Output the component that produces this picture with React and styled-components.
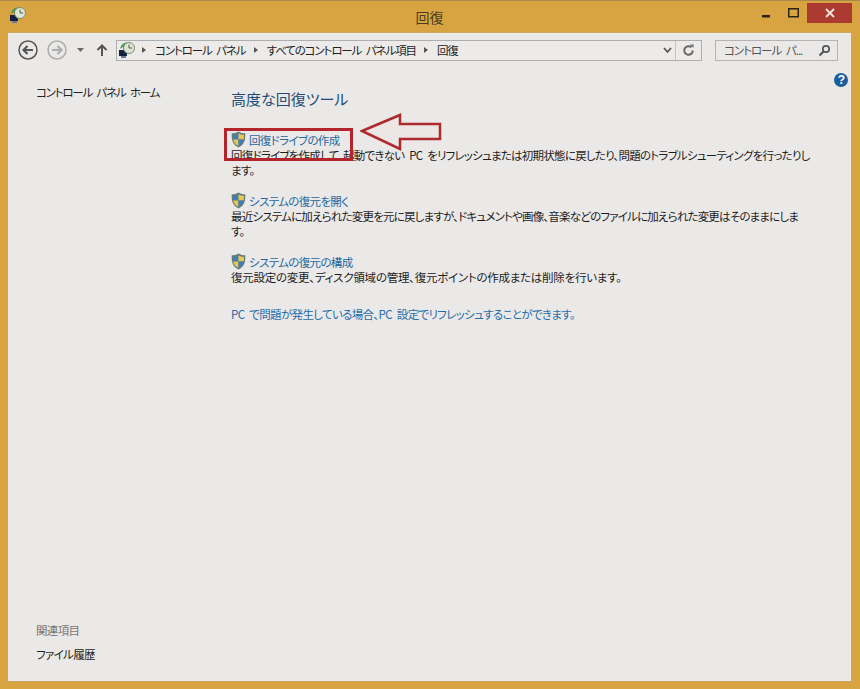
import React from "react";
import styled, { createGlobalStyle } from "styled-components";

const Global = createGlobalStyle`
  html, body { margin: 0; padding: 0; background: #d6a542; }
  body {
    font-family: "Noto Sans CJK JP", "Liberation Sans", sans-serif;
    font-feature-settings: "palt";
    font-size: 11.5px;
    letter-spacing: -0.65px;
    word-spacing: 3px;
    color: #1c1c1c;
  }
`;

const Frame = styled.div`
  width: 860px;
  height: 689px;
  box-sizing: border-box;
  display: flex;
  flex-direction: column;
  padding: 3px 9px 8px 8px;
  background: #d7a441;
  border-top: 1px solid #a98a4c;
  overflow: hidden;
`;

const TitleBar = styled.div`
  position: relative;
  height: 29px;
  flex: none;
  display: flex;
  align-items: center;
  justify-content: center;
  padding-bottom: 4px;
  box-sizing: border-box;
  font-size: 14px;
  letter-spacing: 0;
  color: #4a3c22;
`;

const TitleIcon = styled.div`
  position: absolute;
  left: 1px;
  top: 2px;
`;

const WindowButtons = styled.div`
  position: absolute;
  right: -1px;
  top: -1px;
  display: flex;
  align-items: flex-start;
`;

const WinButton = styled.div`
  width: ${(p) => p.$w}px;
  height: 20px;
  display: flex;
  align-items: center;
  justify-content: center;
  background: ${(p) => p.$bg || "transparent"};
`;

const Client = styled.div`
  flex: 1;
  background: #ebe9e7;
  display: flex;
  flex-direction: column;
  border-top: 1px solid #f3efe6;
  box-shadow: 0 0 0 1px #c9a763;
`;

const Toolbar = styled.div`
  height: 35px;
  flex: none;
  display: flex;
  align-items: center;
  padding: 0 13px 3px 9px;
  box-sizing: border-box;
`;

const NavIcons = styled.div`
  display: flex;
  align-items: center;
  width: 99px;
  flex: none;
`;

const NavGap = styled.span`
  width: 7px;
  flex: none;
`;

const AddressBar = styled.div`
  width: 586px;
  height: 21px;
  flex: none;
  box-sizing: border-box;
  border: 1px solid #aeaeae;
  display: flex;
  align-items: center;
  padding-left: 1px;
  background: #edebe9;
`;

const Crumbs = styled.div`
  flex: 1;
  display: flex;
  align-items: center;
  white-space: nowrap;
  margin-left: -2px;
  letter-spacing: -1.1px;
  color: #222;
`;

const Sep = styled.span`
  width: 0;
  height: 0;
  margin: 0 9px 0 8px;
  border-left: 4px solid #555;
  border-top: 3.5px solid transparent;
  border-bottom: 3.5px solid transparent;
`;

const AddrEnd = styled.div`
  width: 25px;
  align-self: stretch;
  border-left: 1px solid #c4c4c4;
  display: flex;
  align-items: center;
  justify-content: center;
`;

const Chevron = styled.div`
  width: 16px;
  display: flex;
  justify-content: center;
`;

const SearchBox = styled.div`
  margin-left: 13px;
  width: 123px;
  height: 21px;
  flex: none;
  box-sizing: border-box;
  border: 1px solid #b4b4b4;
  display: flex;
  align-items: center;
  justify-content: space-between;
  padding: 0 6px 0 8px;
  letter-spacing: -1px;
  color: #555;
  white-space: nowrap;
`;

const Body = styled.div`
  flex: 1;
  position: relative;
  display: flex;
`;

const Side = styled.aside`
  width: 223px;
  flex: none;
  box-sizing: border-box;
  padding: 14px 0 18px 28px;
  display: flex;
  flex-direction: column;
  justify-content: space-between;
`;

const SideLink = styled.div`
  line-height: 18px;
  letter-spacing: ${(p) => p.$track || -0.65}px;
  color: #222;
`;

const SideHead = styled.div`
  line-height: 18px;
  color: #7a7672;
  margin-bottom: 6px;
`;

const Main = styled.main`
  flex: 1;
  padding-top: 18px;
`;

const Heading = styled.h1`
  margin: 0 0 20px;
  font-size: 15px;
  font-weight: 400;
  line-height: 24px;
  letter-spacing: 0;
  color: #234a76;
`;

const Item = styled.div`
  margin-bottom: ${(p) => p.$gap}px;
`;

const ItemLink = styled.div`
  display: flex;
  align-items: center;
  gap: 3px;
  height: 17px;
  color: #24689f;
`;

const ItemText = styled.div`
  line-height: 15px;
  white-space: nowrap;
  letter-spacing: ${(p) => p.$track}px;
  color: #1c1c1c;
`;

const Plain = styled.div`
  color: #1f6cab;
  line-height: 18px;
`;

const Help = styled.div`
  position: absolute;
  right: 3px;
  top: 4px;
  width: 14px;
  height: 14px;
  border-radius: 50%;
  background: #1c5d9c;
  color: #fff;
  font: bold 12px/14px "Liberation Sans", sans-serif;
  text-align: center;
`;

const RedBox = styled.div`
  position: absolute;
  left: 216px;
  top: 59px;
  width: 129px;
  height: 33px;
  box-sizing: border-box;
  border: 3px solid #b3252a;
`;

const Arrow = styled.svg`
  position: absolute;
  left: 352px;
  top: 44px;
`;

const Cp = () => (
  <svg width="18" height="18" viewBox="0 0 18 18">
    <rect x="1" y="9" width="8" height="6" fill="#15203f" />
    <rect x="3" y="15" width="5" height="2" fill="#6a7a92" />
    <path d="M2 8C3 3.500 6 1.500 9 1.500L8 6 6 8.500 4.500 6z" fill="#3f9a45" />
    <circle cx="11" cy="7" r="5.500" fill="#dfe5d6" stroke="#7b8f72" strokeWidth="1" />
    <path d="M11 3.500V7h3" fill="none" stroke="#46604a" strokeWidth="1" />
  </svg>
);

const Shield = () => (
  <svg width="15" height="17" viewBox="0 0 15 17">
    <path d="M7.500 .5C5.500 1.800 3.300 2.300 .7 2.300c-.2 6.700.8 11.500 6.800 14.200 6-2.700 7-7.500 6.800-14.200C11.700 2.300 9.500 1.800 7.500 .5z" fill="#667a7e" />
    <path d="M7.500 2.200V8.500H2.200C2 7 2 5.300 2 3.700c2 0 3.800-.4 5.500-1.500z" fill="#3f7fb5" />
    <path d="M7.500 2.200C9.200 3.300 11 3.700 13 3.700c0 1.600 0 3.300-.2 4.800H7.500z" fill="#e6c84a" />
    <path d="M2.200 8.500h5.300v6.600C4.200 13.400 2.700 11.300 2.200 8.500z" fill="#e6c84a" />
    <path d="M7.500 8.500h5.300c-.5 2.800-2 4.900-5.300 6.600z" fill="#3f7fb5" />
  </svg>
);

// direction comes from the path, the ring is the same for back and forward
const Circle = ({ c, d }) => (
  <svg width="22" height="22" viewBox="0 0 22 22">
    <circle cx="11" cy="11" r="9" fill="none" stroke={c} strokeWidth="1.500" />
    <path d={d} fill="none" stroke={c} strokeWidth="2.200" />
  </svg>
);

export default function App() {
  return (
    <Frame>
      <Global />
      <TitleBar>
        <TitleIcon>
          <Cp />
        </TitleIcon>
        回復
        <WindowButtons>
          <WinButton $w={30}>
            <svg width="10" height="10" viewBox="0 0 10 10">
              <rect x="1" y="7" width="8" height="2.500" fill="#2b2416" />
            </svg>
          </WinButton>
          <WinButton $w={26}>
            <svg width="12" height="10" viewBox="0 0 12 10">
              <rect x=".75" y=".75" width="9.500" height="8" fill="none" stroke="#2b2416" strokeWidth="1.500" />
            </svg>
          </WinButton>
          <WinButton $w={45} $bg="#ac3a30">
            <svg width="10" height="10" viewBox="0 0 10 10">
              <path d="M1 1l8 8M9 1l-8 8" stroke="#f4e6df" strokeWidth="1.800" />
            </svg>
          </WinButton>
        </WindowButtons>
      </TitleBar>
      <Client>
        <Toolbar>
          <NavIcons>
            <Circle c="#555" d="M16 11H6.500M10.500 7l-4 4 4 4" />
            <NavGap />
            <Circle c="#adadad" d="M6 11h9.500M11.500 7l4 4-4 4" />
            <svg width="27" height="12" viewBox="0 0 27 12">
              <path d="M9 4h7l-3.500 4z" fill="#6a6a6a" />
            </svg>
            <svg width="14" height="14" viewBox="0 0 14 14">
              <path d="M7 13V2.500M2.500 7L7 2.500 11.500 7" fill="none" stroke="#555" strokeWidth="2" />
            </svg>
          </NavIcons>
          <AddressBar>
            <Cp />
            <Crumbs>
              <Sep />
              コントロール パネル
              <Sep />
              すべてのコントロール パネル項目
              <Sep />
              回復
            </Crumbs>
            <Chevron>
              <svg width="9" height="7" viewBox="0 0 9 7">
                <path d="M1 1l3.500 4L8 1" fill="none" stroke="#555" strokeWidth="1.800" />
              </svg>
            </Chevron>
            <AddrEnd>
              <svg width="13" height="13" viewBox="0 0 13 13">
                <path d="M10.800 6.500a4.300 4.300 0 1 1-1.400-3.200" fill="none" stroke="#666" strokeWidth="2" />
                <path d="M8 .5h3.500V4z" fill="#666" />
              </svg>
            </AddrEnd>
          </AddressBar>
          <SearchBox>
            コントロール パ...
            <svg width="13" height="13" viewBox="0 0 13 13">
              <circle cx="8" cy="5" r="3.200" fill="none" stroke="#555" strokeWidth="1.700" />
              <path d="M5.500 7.500L1.500 11.500" stroke="#555" strokeWidth="2.200" />
            </svg>
          </SearchBox>
        </Toolbar>
        <Body>
          <Side>
            <SideLink $track={-1.2}>コントロール パネル ホーム</SideLink>
            <div>
              <SideHead>関連項目</SideHead>
              <SideLink>ファイル履歴</SideLink>
            </div>
          </Side>
          <Main>
            <Heading>高度な回復ツール</Heading>
            <Item $gap={14}>
              <ItemLink>
                <Shield />
                回復ドライブの作成
              </ItemLink>
              <ItemText $track={-0.75}>
                回復ドライブを作成して、起動できない PC をリフレッシュまたは初期状態に戻したり、問題のトラブルシューティングを行ったりし
                <br />
                ます。
              </ItemText>
            </Item>
            <Item $gap={14}>
              <ItemLink>
                <Shield />
                システムの復元を開く
              </ItemLink>
              <ItemText $track={-0.8}>
                最近システムに加えられた変更を元に戻しますが、ドキュメントや画像、音楽などのファイルに加えられた変更はそのままにしま
                <br />
                す。
              </ItemText>
            </Item>
            <Item $gap={20}>
              <ItemLink>
                <Shield />
                システムの復元の構成
              </ItemLink>
              <ItemText $track={-0.25}>復元設定の変更、ディスク領域の管理、復元ポイントの作成または削除を行います。</ItemText>
            </Item>
            <Plain>PC で問題が発生している場合、PC 設定でリフレッシュすることができます。</Plain>
          </Main>
          <Help>?</Help>
          <RedBox />
          <Arrow width="84" height="38" viewBox="0 0 84 38">
            <path d="M2 18L40 2v9h40v15H40v10z" fill="#ece6e4" stroke="#ad2a2e" strokeWidth="2.500" />
          </Arrow>
        </Body>
      </Client>
    </Frame>
  );
}
